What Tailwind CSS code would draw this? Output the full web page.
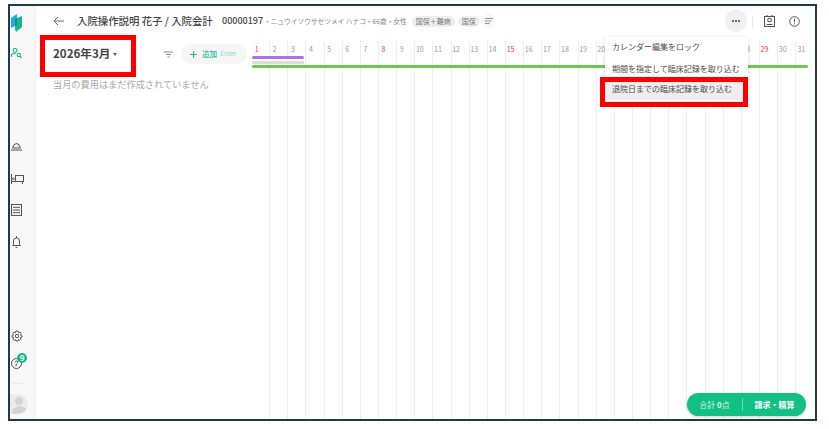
<!DOCTYPE html>
<html lang="ja">
<head>
  <meta charset="UTF-8" />
  <title>入院会計</title>
  <script src="https://cdn.jsdelivr.net/npm/@tailwindcss/browser@4"></script>
</head>
<body class="bg-white w-[829px] h-[429px] overflow-hidden font-['Noto_Sans_CJK_JP','Noto_Sans',sans-serif] text-[#444]">
  <div class="ml-[8px] mt-[4px] w-[809px] h-[417px] border-2 border-[#1d3b4b] flex overflow-hidden relative">

    <!-- Sidebar -->
    <aside class="w-[26px] shrink-0 bg-[#f8f8f8] border-r border-[#f0f0f0] flex flex-col items-start text-[#666]">
      <svg class="mt-[8px] ml-px" width="11" height="18" viewBox="0 0 11 18">
        <path d="M0 4 L6 0 V11 L0 14 Z" fill="#1ea7e8"/>
        <path d="M4 5 L11 2 V13 L5 18 L4 15 Z" fill="#15b88a"/>
        <path d="M4 5 L6 4 V11 L4 12 Z" fill="#0f8f8f"/>
      </svg>
      <svg class="mt-[16px] ml-px" width="11" height="10" viewBox="0 0 11 10" fill="none" stroke="#13b77f" stroke-width="1.1">
        <circle cx="4" cy="2.4" r="1.9"/><path d="M0.5 9 V7.5 Q0.5 5.5 3.5 5.5 H4.5"/><circle cx="7.8" cy="7" r="1.7"/><path d="M9 8.3 L10.8 9.8"/>
      </svg>
      <svg class="mt-[84px] ml-px" width="11" height="9" viewBox="0 0 11 9" fill="#eee" stroke="#555" stroke-width="1">
        <path d="M1.5 6 Q2.5 1.5 5.5 1.5 Q8.5 1.5 9.5 6 Z"/><path d="M0 8 H11"/>
      </svg>
      <svg class="mt-[23px] ml-px" width="13" height="10" viewBox="0 0 13 10" fill="none" stroke="#555" stroke-width="1">
        <path d="M0.5 0 V10"/><rect x="4.5" y="1.5" width="8" height="6"/><path d="M0.5 7.5 H12.5 M11.5 7.5 V10"/><circle cx="2.4" cy="4.8" r="0.9"/>
      </svg>
      <svg class="mt-[20px] ml-px" width="11" height="12" viewBox="0 0 11 12" fill="none" stroke="#555" stroke-width="1">
        <rect x="0.5" y="0.5" width="10" height="11"/><path d="M2 3.3 H9 M2 6 H9 M2 8.7 H9"/>
      </svg>
      <svg class="mt-[20px] ml-[2px]" width="9" height="12" viewBox="0 0 9 12" fill="none" stroke="#555" stroke-width="1">
        <path d="M1.5 8.5 V5 Q1.5 2 4.5 2 Q7.5 2 7.5 5 V8.5 L8.5 9.5 H0.5 Z"/><path d="M4.5 0 V2 M3.5 11.3 H5.5"/>
      </svg>
      <svg class="mt-[82px] ml-px" width="12" height="12" viewBox="0 0 24 24" fill="none" stroke="#555" stroke-width="2">
        <circle cx="12" cy="12" r="3.5"/>
        <path d="M10 2 H14 L15 5.5 L18 4 L20.5 7 L18.5 9.5 L22 11 V14 L18.5 15 L20 18.5 L17.5 21 L15 19 L14 22 H10 L9 19 L6.5 21 L4 18.5 L5.5 15 L2 14 V11 L5.5 9.5 L3.5 7 L6 4 L9 5.5 Z"/>
      </svg>
      <div class="relative mt-[16px] ml-px w-[11px] h-[11px]">
        <svg width="11" height="11" viewBox="0 0 11 11" fill="none" stroke="#555" stroke-width="1">
          <circle cx="5.5" cy="5.5" r="5"/><path d="M4.2 4.2 Q4.4 3 5.6 3 Q7 3 6.8 4.3 Q6.6 5.2 5.5 6 L4.8 8.2"/>
        </svg>
        <span class="absolute left-[6px] top-[-5px] w-[10px] h-[10px] rounded-full bg-[#13c08a] text-white text-[8px] leading-[10px] text-center font-bold">9</span>
      </div>
      <div class="w-[14px] h-px bg-[#ececec] mt-[14px] ml-[2px]"></div>
      <div class="mt-[10px] w-[18px] h-[20px] rounded-r-full bg-[#ececec] overflow-hidden flex flex-col items-center">
        <div class="w-[8px] h-[8px] rounded-full bg-[#d4d4d4] mt-[3px] shrink-0"></div>
        <div class="w-[15px] h-[8px] rounded-t-full bg-[#d4d4d4] mt-px shrink-0"></div>
      </div>
    </aside>

    <main class="flex-1 min-w-0 flex flex-col relative">
      <!-- Top bar -->
      <header class="h-[30px] shrink-0 flex items-center">
        <svg class="ml-[17px]" width="11" height="10" viewBox="0 0 11 10" fill="none" stroke="#666" stroke-width="1">
          <path d="M11 5 H1 M5 1 L1 5 L5 9"/>
        </svg>
        <span class="ml-[13px] w-[135px] text-[10.4px] font-medium text-[#444] whitespace-nowrap">入院操作説明 花子 / 入院会計</span>
        <span class="ml-[10px] text-[9px] font-medium text-[#444] whitespace-nowrap">00000197</span>
        <span class="ml-px text-[6.7px] text-[#888] whitespace-nowrap">・ニュウイソウサセツメイ ハナコ・66歳・女性</span>
        <span class="ml-[5px] h-[11px] px-[4px] rounded-full bg-[#eee] text-[7px] leading-[11px] text-[#777] whitespace-nowrap">国保＋難病</span>
        <span class="ml-[3px] h-[11px] px-[4px] rounded-full bg-[#eee] text-[7px] leading-[11px] text-[#777] whitespace-nowrap">国保</span>
        <span class="ml-[2px] w-[14px] h-[14px] rounded-full bg-[#f7f7f7] flex items-center justify-center">
          <svg width="8" height="6" viewBox="0 0 8 6" fill="none" stroke="#777" stroke-width="0.8">
            <path d="M0 0.5 H8 M0 3 H6.5 M0 5.5 H4.5"/>
          </svg>
        </span>
        <div class="ml-auto flex items-center">
          <div class="w-[22px] h-[22px] rounded-full bg-[#f0f0f0] flex items-center justify-center gap-px">
            <i class="w-[2px] h-[2px] rounded-full bg-[#444]"></i><i class="w-[2px] h-[2px] rounded-full bg-[#444]"></i><i class="w-[2px] h-[2px] rounded-full bg-[#444]"></i>
          </div>
          <div class="w-px h-[13px] bg-[#e8e8e8] ml-[5px]"></div>
          <svg class="ml-[11px]" width="11" height="12" viewBox="0 0 11 12" fill="none" stroke="#555" stroke-width="1.1">
            <rect x="0.5" y="1.5" width="10" height="10"/><circle cx="5.5" cy="5" r="1.8"/><path d="M2.5 9.5 H8.5 M3 0 V2 M8 0 V2"/>
          </svg>
          <svg class="ml-[14px] mr-[15px]" width="11" height="11" viewBox="0 0 11 11" fill="none" stroke="#555" stroke-width="1">
            <circle cx="5.5" cy="5.5" r="4.8"/><path d="M5.5 2.8 V6.2 M5.5 7.3 V8.3"/>
          </svg>
        </div>
      </header>

      <div class="flex-1 flex min-h-0">
        <!-- Left column -->
        <section class="w-[216px] shrink-0">
          <div class="flex items-center h-[36px]">
            <span class="ml-[17px] w-[56px] text-[11.6px] font-semibold text-[#444] whitespace-nowrap">2026年3月</span>
            <span class="ml-[4px] w-0 h-0 border-x-[2.5px] border-x-transparent border-t-[3px] border-t-[#666]"></span>
            <svg class="ml-[47px]" width="9" height="7" viewBox="0 0 9 7" fill="none" stroke="#777" stroke-width="0.9">
              <path d="M0 1 H9 M2 3.5 H7 M3.5 6 H5.5"/>
            </svg>
            <div class="ml-[8px] h-[20px] w-[66px] pl-[9px] rounded-full bg-[#f6f6f6] flex items-center whitespace-nowrap text-[#1cbd8c]">
              <svg width="7" height="7" viewBox="0 0 7 7" fill="none" stroke="#1cbd8c" stroke-width="1.1"><path d="M3.5 0 V7 M0 3.5 H7"/></svg>
              <span class="ml-[5px] text-[7.5px] font-medium">追加</span>
              <span class="ml-[3px] text-[6.5px] text-[#8fe0c6]">Enter</span>
            </div>
          </div>
          <p class="ml-[17px] mt-[6px] text-[9.2px] text-[#aaa] whitespace-nowrap">当月の費用はまだ作成されていません</p>
        </section>

        <!-- Calendar -->
        <section class="flex-1 min-w-0 relative pt-[5px]">
          <div id="days" class="grid grid-cols-[repeat(31,18.15px)] h-full"></div>
          <!-- Bars over the grid -->
          <div class="absolute left-0 top-[20px] w-[52px] h-[3px] rounded-full bg-[#a874e8]"></div>
          <div class="absolute left-0 top-[25px] w-[52px] h-[2.5px] bg-[#ddd]"></div>
          <div class="absolute left-0 right-[7px] top-[29px] h-[3px] rounded-full bg-[#6cc84f]"></div>
        </section>
      </div>

      <!-- Dropdown menu -->
      <div class="absolute left-[569px] top-[31px] w-[143px] bg-white rounded-[2px] shadow-[0_1px_4px_rgba(0,0,0,0.15)] text-[#4a4a4a] text-[8px] whitespace-nowrap">
        <div class="h-[21px] leading-[19px] pl-[7px]">カレンダー編集をロック</div>
        <div class="h-[21px] leading-[21px] pl-[7px]">期間を指定して臨床記録を取り込む</div>
        <div class="h-[21px] leading-[19px] pl-[7px] bg-[#eee] mb-[1px]">退院日までの臨床記録を取り込む</div>
      </div>

      <!-- Total button -->
      <div class="absolute right-[9px] bottom-[3px] w-[119px] h-[23px] rounded-full bg-[#13c084] shadow-[0_1px_3px_rgba(0,0,0,0.2)] flex items-center text-white text-[8px] whitespace-nowrap">
        <span class="w-[55px] text-center text-[#d6f5ea]">合計 <b class="font-bold">0</b>点</span>
        <span class="w-px h-[13px] bg-white/40"></span>
        <span class="flex-1 text-center font-bold">請求・精算</span>
      </div>
    </main>

    <!-- Annotation boxes -->
    <div class="absolute left-[30px] top-[29px] w-[96px] h-[42px] border-[5px] border-[#f00]"></div>
    <div class="absolute left-[590px] top-[71px] w-[148px] h-[30px] border-[5px] border-[#f00]"></div>
  </div>

  <script>
    const red = [1, 8, 15, 22, 29]
    const days = document.getElementById("days")
    for (let d = 1; d <= 31; d++) {
      const cell = document.createElement("div")
      cell.className = "text-center text-[7px] leading-[10px] pt-[3px] pr-[8px] " +
        (d < 31 ? "border-r border-[#eee] " : "") +
        (red.includes(d) ? "text-[#e8413c]" : "text-[#999]")
      cell.textContent = d
      days.appendChild(cell)
    }
  </script>
</body>
</html>
